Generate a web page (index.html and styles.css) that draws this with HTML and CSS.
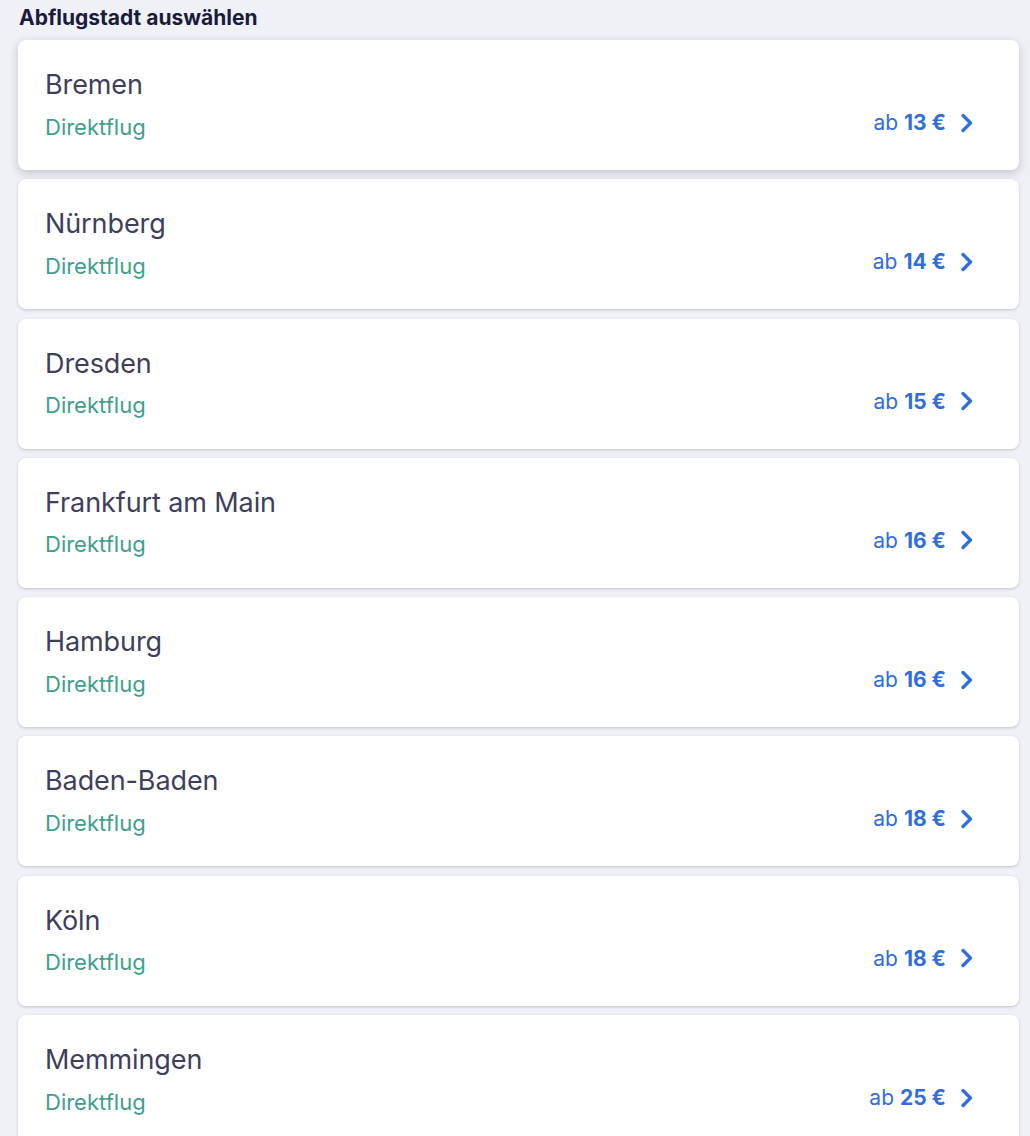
FILE: index.html
```html
<!DOCTYPE html>
<html lang="de">
<head>
<meta charset="utf-8">
<title>Abflugstadt auswählen</title>
<link rel="stylesheet" href="styles.css">
</head>
<body>
<main class="page">
  <h2 class="title">Abflugstadt auswählen</h2>
  <ul class="list">
    <li class="card card--active"><div class="name">Bremen</div><div class="row"><span class="type">Direktflug</span><span class="price">ab <b>13 €</b><svg class="chev" viewBox="0 0 16 22" width="16" height="22"><path d="M4 3.5 L11.5 11 L4 18.5" fill="none" stroke="currentColor" stroke-width="3.4" stroke-linecap="round" stroke-linejoin="round"/></svg></span></div></li>
    <li class="card"><div class="name">Nürnberg</div><div class="row"><span class="type">Direktflug</span><span class="price">ab <b>14 €</b><svg class="chev" viewBox="0 0 16 22" width="16" height="22"><path d="M4 3.5 L11.5 11 L4 18.5" fill="none" stroke="currentColor" stroke-width="3.4" stroke-linecap="round" stroke-linejoin="round"/></svg></span></div></li>
    <li class="card"><div class="name">Dresden</div><div class="row"><span class="type">Direktflug</span><span class="price">ab <b>15 €</b><svg class="chev" viewBox="0 0 16 22" width="16" height="22"><path d="M4 3.5 L11.5 11 L4 18.5" fill="none" stroke="currentColor" stroke-width="3.4" stroke-linecap="round" stroke-linejoin="round"/></svg></span></div></li>
    <li class="card"><div class="name">Frankfurt am Main</div><div class="row"><span class="type">Direktflug</span><span class="price">ab <b>16 €</b><svg class="chev" viewBox="0 0 16 22" width="16" height="22"><path d="M4 3.5 L11.5 11 L4 18.5" fill="none" stroke="currentColor" stroke-width="3.4" stroke-linecap="round" stroke-linejoin="round"/></svg></span></div></li>
    <li class="card"><div class="name">Hamburg</div><div class="row"><span class="type">Direktflug</span><span class="price">ab <b>16 €</b><svg class="chev" viewBox="0 0 16 22" width="16" height="22"><path d="M4 3.5 L11.5 11 L4 18.5" fill="none" stroke="currentColor" stroke-width="3.4" stroke-linecap="round" stroke-linejoin="round"/></svg></span></div></li>
    <li class="card"><div class="name">Baden-Baden</div><div class="row"><span class="type">Direktflug</span><span class="price">ab <b>18 €</b><svg class="chev" viewBox="0 0 16 22" width="16" height="22"><path d="M4 3.5 L11.5 11 L4 18.5" fill="none" stroke="currentColor" stroke-width="3.4" stroke-linecap="round" stroke-linejoin="round"/></svg></span></div></li>
    <li class="card"><div class="name">Köln</div><div class="row"><span class="type">Direktflug</span><span class="price">ab <b>18 €</b><svg class="chev" viewBox="0 0 16 22" width="16" height="22"><path d="M4 3.5 L11.5 11 L4 18.5" fill="none" stroke="currentColor" stroke-width="3.4" stroke-linecap="round" stroke-linejoin="round"/></svg></span></div></li>
    <li class="card"><div class="name">Memmingen</div><div class="row"><span class="type">Direktflug</span><span class="price">ab <b>25 €</b><svg class="chev" viewBox="0 0 16 22" width="16" height="22"><path d="M4 3.5 L11.5 11 L4 18.5" fill="none" stroke="currentColor" stroke-width="3.4" stroke-linecap="round" stroke-linejoin="round"/></svg></span></div></li>
  </ul>
</main>
</body>
</html>
```
FILE: styles.css
```css
html, body {
  margin: 0;
  padding: 0;
  background: #f0f1f7;
  font-family: Inter, "Noto Sans", sans-serif;
}
.page {
  padding: 4px 11px 0 18px;
  height: 1136px;
  overflow: hidden;
  box-sizing: border-box;
}
.title {
  margin: 0 0 9px 1px;
  font-size: 21px;
  line-height: 27px;
  font-weight: 700;
  color: #1b1c3b;
}
.list {
  list-style: none;
  margin: 0;
  padding: 0;
  display: flex;
  flex-direction: column;
  gap: 9.3px;
}
.card {
  background: #fff;
  border-radius: 8px;
  height: 130px;
  box-sizing: border-box;
  padding: 29px 44px 0 27px;
  box-shadow: 0 1px 3px rgba(30, 30, 60, 0.22);
}
.card--active {
  box-shadow: 0 3px 10px rgba(30, 30, 60, 0.22);
}
.name {
  font-size: 27px;
  line-height: 32px;
  color: #3e3f5c;
  letter-spacing: -0.1px;
}
.row {
  margin-top: 9px;
  display: flex;
  justify-content: space-between;
  align-items: center;
}
.type {
  font-size: 22px;
  line-height: 26px;
  color: #3ea08c;
}
.price {
  display: flex;
  align-items: center;
  font-size: 21px;
  color: #2f6edb;
  margin-bottom: 8px;
}
.price b {
  font-weight: 700;
  margin-left: 6px;
}
.chev {
  margin-left: 13px;
  color: #2f6edb;
}
```
